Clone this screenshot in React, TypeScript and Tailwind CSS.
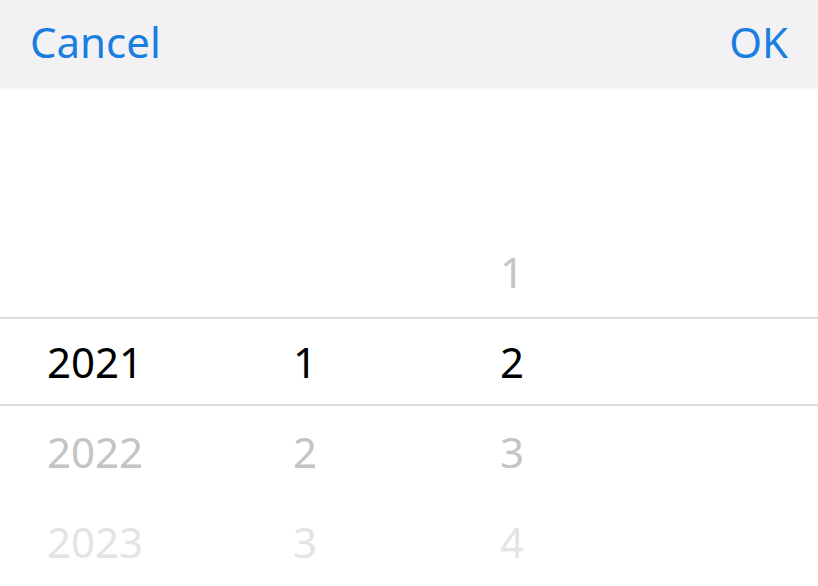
import React from "react";

const cols: { w: string; items: (string | null)[] }[] = [
  { w: "w-[190px]", items: [null, null, "2021", "2022", "2023"] },
  { w: "w-[230px]", items: [null, null, "1", "2", "3"] },
  { w: "w-[184px]", items: [null, "1", "2", "3", "4"] },
];

const colorFor = (i: number) => {
  const d = Math.abs(i - 2);
  if (d === 0) return "text-black";
  if (d === 1) return "text-[#c4c4c4]";
  return "text-[#e4e4e4]";
};

export default function App() {
  return (
    <div
      className="w-[818px] h-[586px] overflow-hidden bg-white relative"
      style={{ fontFamily: '"Noto Sans", "Open Sans", sans-serif' }}
    >
      <div className="h-[90px] bg-[#f2f2f4] border-b-2 border-[#f7f7f9] flex items-center justify-between pl-[30px] pr-[30px] pb-[4px]">
        <span className="text-[#1a7ee0] text-[42px] leading-none">Cancel</span>
        <span className="text-[#1a7ee0] text-[42px] leading-none">OK</span>
      </div>
      <div className="relative">
        <div className="flex pt-[47px]">
          {cols.map((c, ci) => (
            <div key={ci} className={`${c.w} flex flex-col`}>
              {c.items.map((t, i) => (
                <div
                  key={i}
                  className={`h-[90px] flex items-center justify-center text-[42px] leading-none ${colorFor(i)}`}
                >
                  {t ?? ""}
                </div>
              ))}
            </div>
          ))}
        </div>
        <div className="absolute left-0 right-0 top-[227px] h-[89px] border-t-2 border-b-2 border-[#dcdcdc] pointer-events-none" />
      </div>
    </div>
  );
}
